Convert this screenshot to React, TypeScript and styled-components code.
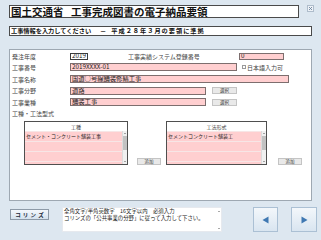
import React from 'react';
import styled, { createGlobalStyle } from 'styled-components';

const Global = createGlobalStyle`
  html, body { margin: 0; padding: 0; }
  body {
    background: #dde7f0;
    font-family: "Noto Sans CJK JP", "Noto Sans", sans-serif;
  }
  * { box-sizing: border-box; }
`;

const Screen = styled.div`
  width: 321px;
  height: 240px;
  overflow: hidden;
  background: #dde7f0;
  padding: 5px 0 0 9px;
  display: flex;
  flex-direction: column;
`;

const HeaderRow = styled.div`
  display: flex;
  align-items: flex-start;
`;

const TitleBox = styled.div`
  width: 290px;
  height: 13px;
  border: 1px solid #4a4a4a;
  background: #fff;
  padding-left: 1px;
  font-size: 10.5px;
  font-weight: 700;
  line-height: 11px;
  color: #111;
  word-spacing: 5px;
  white-space: nowrap;
`;

const CloseBtn = styled.div`
  width: 7px;
  height: 7px;
  margin-left: 8px;
  border: 1px solid #aebccb;
  background: #eef2f7;
  display: flex;
  align-items: center;
  justify-content: center;
`;

const InfoBar = styled.div`
  margin-top: 8px;
  width: 303px;
  height: 10px;
  border: 1px solid #4a4a4a;
  background: #fff;
  padding-left: 1px;
  font-size: 6.2px;
  font-weight: 700;
  line-height: 8px;
  color: #111;
  white-space: nowrap;
  display: flex;
  align-items: center;
`;

const InfoDash = styled.span`
  margin: 0 5px 0 9px;
`;

const InfoTail = styled.span`
  letter-spacing: 1px;
`;

const Panel = styled.div`
  margin-top: 13px;
  width: 303px;
  height: 152px;
  border: 1px solid #9ea8b2;
  background: #fff;
  padding: 2.7px 0 0 2px;
  display: flex;
  flex-direction: column;
`;

const Rows = styled.div`
  display: flex;
  flex-direction: column;
  gap: 3.7px;
`;

const Row = styled.div<{ $h?: number }>`
  display: flex;
  align-items: center;
  height: ${(p) => p.$h ?? 8}px;
`;

const Label = styled.span<{ $w?: number; $ml?: number }>`
  width: ${(p) => p.$w ?? 58}px;
  margin-left: ${(p) => p.$ml ?? 0}px;
  flex-shrink: 0;
  font-size: 6px;
  line-height: 7px;
  color: #444;
  white-space: nowrap;
`;

const Field = styled.div<{ $w: number; $pink?: boolean; $h?: number; $ml?: number }>`
  width: ${(p) => p.$w}px;
  height: ${(p) => p.$h ?? 8}px;
  margin-left: ${(p) => p.$ml ?? 0}px;
  flex-shrink: 0;
  border: 1px solid ${(p) => (p.$pink ? '#7d6e6e' : '#3c3c3c')};
  background: ${(p) => (p.$pink ? '#ffcfd0' : '#fff')};
  padding-left: 1px;
  font-size: 6.3px;
  line-height: 6px;
  color: #222;
  white-space: nowrap;
  overflow: hidden;
  display: flex;
  align-items: center;
`;

const SmallBtn = styled.div<{ $w: number; $h?: number; $ml: number }>`
  width: ${(p) => p.$w}px;
  height: ${(p) => p.$h ?? 7}px;
  margin-left: ${(p) => p.$ml}px;
  flex-shrink: 0;
  border: 1px solid #c4c4c4;
  background: #e9e9e9;
  font-size: 4.5px;
  color: #333;
  display: flex;
  align-items: center;
  justify-content: center;
  line-height: 5px;
`;

const Check = styled.span`
  width: 4px;
  height: 4px;
  margin-left: 5px;
  margin-right: 1px;
  border: 1px solid #9a9a9a;
  background: #fff;
  flex-shrink: 0;
`;

const SectionLabel = styled.div`
  margin-top: 4.5px;
  height: 6px;
  font-size: 6px;
  line-height: 6px;
  color: #444;
`;

const ListsRow = styled.div`
  margin-top: 4px;
  display: flex;
  align-items: flex-end;
`;

const ListBox = styled.div<{ $w: number; $ml: number }>`
  width: ${(p) => p.$w}px;
  height: 44px;
  margin-left: ${(p) => p.$ml}px;
  border: 1px solid #4f4f4f;
  background: #fff;
  display: flex;
  flex-direction: column;
  flex-shrink: 0;
`;

const ListHead = styled.div`
  height: 9px;
  font-size: 5px;
  line-height: 9px;
  text-align: center;
  color: #444;
`;

const ListBody = styled.div`
  flex: 1;
  display: flex;
  overflow: hidden;
`;

const ListRows = styled.div`
  flex: 1;
  display: flex;
  flex-direction: column;
`;

const ListItem = styled.div`
  height: 10px;
  flex-shrink: 0;
  background: #ffcfd0;
  border-top: 1px solid #f7e6e6;
  padding-left: 1px;
  font-size: 5px;
  line-height: 8px;
  color: #222;
  white-space: nowrap;
`;

const ScrollBar = styled.div`
  width: 5px;
  background: #f0f0f0;
  border-left: 1px solid #dcdcdc;
  display: flex;
  flex-direction: column;
  align-items: center;
`;

const Thumb = styled.div<{ $top: number; $h: number }>`
  margin-top: ${(p) => p.$top}px;
  width: 4px;
  height: ${(p) => p.$h}px;
  background: #c2c2c2;
`;

const Arrow = styled.div<{ $dir: 'up' | 'down' }>`
  width: 0;
  height: 0;
  margin-top: ${(p) => (p.$dir === 'up' ? 2 : 0)}px;
  border-left: 1px solid transparent;
  border-right: 1px solid transparent;
  ${(p) =>
    p.$dir === 'up'
      ? 'border-bottom: 1.5px solid #555;'
      : 'border-top: 1.5px solid #555;'}
`;

const Spacer = styled.div`
  flex: 1;
`;

const Footer = styled.div`
  margin-top: 6px;
  height: 25px;
  display: flex;
  align-items: flex-start;
`;

const CorinsBtn = styled.div`
  margin: 2px 0 0 1px;
  width: 39px;
  height: 11px;
  border: 1px solid #8d9aa8;
  background: linear-gradient(#f4f8fc, #d4e1ee);
  font-size: 5.5px;
  font-weight: 700;
  letter-spacing: 2.2px;
  color: #1d2a3a;
  display: flex;
  align-items: center;
  justify-content: center;
  padding-left: 2px;
`;

const NoteBox = styled.div`
  margin-left: 13px;
  width: 160px;
  height: 25px;
  background: #fff;
  border: 1px solid #e6e9ee;
  display: flex;
`;

const NoteText = styled.div`
  flex: 1;
  padding: 0 0 0 1px;
  font-size: 5.4px;
  line-height: 6.8px;
  color: #222;
  white-space: nowrap;
  overflow: hidden;
`;

const NoteScroll = styled.div`
  width: 5px;
  display: flex;
  flex-direction: column;
  align-items: center;
  padding: 1px 0 2px;
`;

const NavBtn = styled.div<{ $ml: number; $w: number }>`
  margin-left: ${(p) => p.$ml}px;
  width: ${(p) => p.$w}px;
  height: 25px;
  border: 1px solid #abc0d4;
  background: linear-gradient(#f3f7fb, #d9e5f0);
  display: flex;
  align-items: center;
  justify-content: center;
`;

const Tri = ({ dir }: { dir: 'left' | 'right' }) => (
  <svg width="7" height="8" viewBox="0 0 7 8">
    {dir === 'left' ? (
      <polygon points="6.5,0.5 6.5,7.5 0.5,4" fill="#3f78b2" />
    ) : (
      <polygon points="0.5,0.5 0.5,7.5 6.5,4" fill="#3f78b2" />
    )}
  </svg>
);

const List = ({ w, ml, title, item }: { w: number; ml: number; title: string; item: string }) => (
  <ListBox $w={w} $ml={ml}>
    <ListHead>{title}</ListHead>
    <ListBody>
      <ListRows>
        <ListItem>{item}</ListItem>
        <ListItem />
        <ListItem />
        <ListItem />
      </ListRows>
      <ScrollBar>
        <Arrow $dir="up" />
        <Thumb $top={2} $h={14} />
        <Spacer />
        <Arrow $dir="down" />
        <div style={{ height: 2 }} />
      </ScrollBar>
    </ListBody>
  </ListBox>
);

export default function App() {
  return (
    <>
      <Global />
      <Screen>
        <HeaderRow>
          <TitleBox>国土交通省 工事完成図書の電子納品要領</TitleBox>
          <CloseBtn>
            <svg width="5" height="5" viewBox="0 0 5 5">
              <path d="M1 1 L4 4 M4 1 L1 4" stroke="#6f87a0" strokeWidth="0.9" />
            </svg>
          </CloseBtn>
        </HeaderRow>
        <InfoBar>
          工事情報を入力してください
          <InfoDash>－</InfoDash>
          <InfoTail>平成２８年３月の要領に準拠</InfoTail>
        </InfoBar>
        <Panel>
          <Rows>
            <Row $h={7}>
              <Label>発注年度</Label>
              <Field $w={18} $h={7}>2019</Field>
              <Label $w={72} $ml={40}>工事実績システム登録番号</Label>
              <Field $w={45} $h={7} $ml={39} $pink>0</Field>
            </Row>
            <Row>
              <Label>工事番号</Label>
              <Field $w={167} $pink>2019XXXX-01</Field>
              <Check />
              <Label $w={40}>日本語入力可</Label>
            </Row>
            <Row>
              <Label>工事名称</Label>
              <Field $w={219} $pink>国道○号線舗装修繕工事</Field>
            </Row>
            <Row>
              <Label>工事分野</Label>
              <Field $w={136} $pink>道路</Field>
              <SmallBtn $w={25} $ml={6}>選択</SmallBtn>
            </Row>
            <Row>
              <Label>工事業種</Label>
              <Field $w={136} $pink>舗装工事</Field>
              <SmallBtn $w={25} $ml={6}>選択</SmallBtn>
            </Row>
          </Rows>
          <SectionLabel>工種・工法型式</SectionLabel>
          <ListsRow>
            <List w={104} ml={12} title="工種" item="セメント・コンクリート舗装工事" />
            <SmallBtn $w={24} $ml={9}>追加</SmallBtn>
            <List w={101} ml={5} title="工法形式" item="セメントコンクリート舗装工" />
            <SmallBtn $w={24} $ml={11}>追加</SmallBtn>
          </ListsRow>
        </Panel>
        <Footer>
          <CorinsBtn>コリンズ</CorinsBtn>
          <NoteBox>
            <NoteText>
              全角文字/半角英数字　16文字以内　必須入力
              <br />
              コリンズの「公共事業の分野」に従って入力して下さい。
            </NoteText>
            <NoteScroll>
              <Arrow $dir="up" />
              <Spacer />
              <Arrow $dir="down" />
            </NoteScroll>
          </NoteBox>
          <NavBtn $ml={31} $w={25}>
            <Tri dir="left" />
          </NavBtn>
          <NavBtn $ml={13} $w={26}>
            <Tri dir="right" />
          </NavBtn>
        </Footer>
      </Screen>
    </>
  );
}
